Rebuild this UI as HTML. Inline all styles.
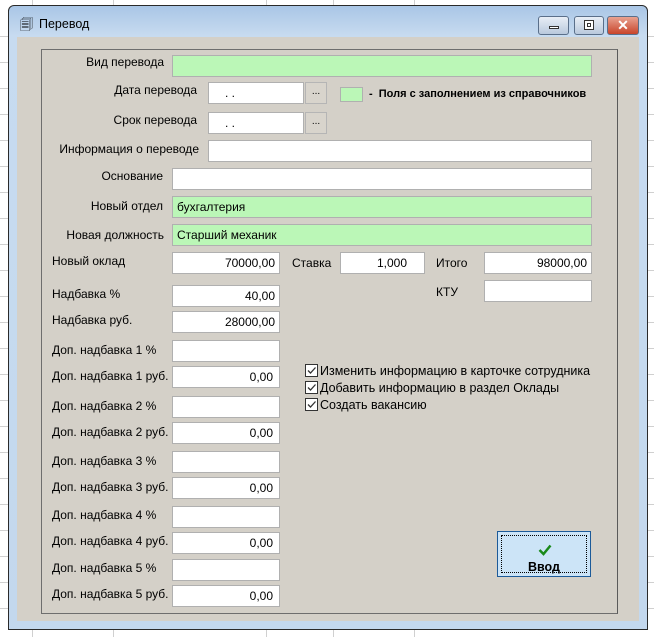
<!DOCTYPE html>
<html><head><meta charset="utf-8"><style>
*{margin:0;padding:0;box-sizing:border-box}
body{width:654px;height:637px;position:relative;overflow:hidden;background:#fff;font-family:"Liberation Sans",Arial,sans-serif;font-size:12px;color:#000}
.a{position:absolute}
.vl{position:absolute;top:0;width:1px;height:637px;background:#d0d0d0}
.hl{position:absolute;left:0;height:1px;width:654px;background:#d0d0d0}
.win{position:absolute;left:8px;top:5px;width:640px;height:625px;border:1px solid #2a2a2a;border-radius:6px 6px 0 0;background:linear-gradient(#a9c6e6,#c7dbf0 30px,#c3d8ee);}
.client{position:absolute;left:8px;top:31px;width:622px;height:584px;background:#d4d0c8}
.frame{position:absolute;left:24px;top:12px;width:577px;height:565px;border:1px solid #6e6e6e;border-right-color:#5a5a5a}
.in{position:absolute;background:#fff;border:1px solid #b0b0b0;height:22px;text-align:right;padding-right:14px;line-height:20px;font-size:12px}
.g{background:#bbf7b7;text-align:left;padding-left:4px}
.l{position:absolute;line-height:20px;font-size:12px;white-space:nowrap}
.r{text-align:right}
.btn{position:absolute;width:22px;height:22px;border:1px solid #b5b5b5;background:#d8d4cc;text-align:center;font-size:10px;line-height:18px}
.cb{position:absolute;width:13px;height:13px;border:1px solid #333;background:#fff}
.tb{position:absolute;top:10px;height:19px;border:1px solid #5a6f8a;border-radius:3px}
</style></head><body>
<div class="vl" style="left:32px"></div><div class="vl" style="left:113px"></div><div class="vl" style="left:266px"></div><div class="vl" style="left:333px"></div><div class="vl" style="left:414px"></div>
<div class="hl" style="top:36px"></div><div class="hl" style="top:62px"></div><div class="hl" style="top:88px"></div><div class="hl" style="top:114px"></div><div class="hl" style="top:140px"></div><div class="hl" style="top:166px"></div><div class="hl" style="top:192px"></div><div class="hl" style="top:218px"></div><div class="hl" style="top:244px"></div><div class="hl" style="top:270px"></div><div class="hl" style="top:296px"></div><div class="hl" style="top:322px"></div><div class="hl" style="top:348px"></div><div class="hl" style="top:374px"></div><div class="hl" style="top:400px"></div><div class="hl" style="top:426px"></div><div class="hl" style="top:452px"></div><div class="hl" style="top:478px"></div><div class="hl" style="top:504px"></div><div class="hl" style="top:530px"></div><div class="hl" style="top:556px"></div><div class="hl" style="top:582px"></div><div class="hl" style="top:608px"></div>
<div class="win">
 <div class="a" style="left:11px;top:10px;font-size:13px">&#x1F5D0;</div>
 <div class="a" style="left:30px;top:11px;font-size:12.5px">Перевод</div>
 <div class="tb" style="left:529px;width:31px;background:linear-gradient(#e8eef6,#b9c9dd)"><div class="a" style="left:10px;top:9px;width:10px;height:3px;background:#fff;border:1px solid #333"></div></div>
 <div class="tb" style="left:565px;width:30px;background:linear-gradient(#e8eef6,#b9c9dd)"><div class="a" style="left:9px;top:3px;width:10px;height:10px;border:1px solid #333;background:#fff"><div style="margin:2px;width:4px;height:4px;border:1px solid #333"></div></div></div>
 <div class="tb" style="left:598px;width:32px;background:linear-gradient(#e9a290,#c8442a);color:#fff;font-weight:bold;text-align:center;line-height:16px;font-size:14px">✕</div>
 <div class="client"><div class="frame"></div></div>
</div>
<div class="l r" style="left:40px;width:124px;top:52px">Вид перевода</div>
<div class="in g" style="left:172px;top:55px;width:420px"></div>
<div class="l r" style="left:40px;width:157px;top:80px">Дата перевода</div>
<div class="in" style="left:208px;top:82px;width:96px;text-align:left;padding-left:16px">. .</div>
<div class="btn" style="left:305px;top:82px">...</div>
<div class="a" style="left:340px;top:87px;width:23px;height:15px;background:#bbf7b7;border:1px solid #b0b0b0"></div>
<div class="l" style="left:369px;top:84px;font-weight:bold;font-size:11px">-&nbsp; Поля с заполнением из справочников</div>
<div class="l r" style="left:40px;width:157px;top:110px">Срок перевода</div>
<div class="in" style="left:208px;top:112px;width:96px;text-align:left;padding-left:16px">. .</div>
<div class="btn" style="left:305px;top:112px">...</div>
<div class="l r" style="left:40px;width:159px;top:139px">Информация о переводе</div>
<div class="in" style="left:208px;top:140px;width:384px"></div>
<div class="l r" style="left:40px;width:123px;top:166px">Основание</div>
<div class="in" style="left:172px;top:168px;width:420px"></div>
<div class="l r" style="left:40px;width:123px;top:196px">Новый отдел</div>
<div class="in g" style="left:172px;top:196px;width:420px">бухгалтерия</div>
<div class="l r" style="left:40px;width:124px;top:225px">Новая должность</div>
<div class="in g" style="left:172px;top:224px;width:420px">Старший механик</div>
<div class="l" style="left:52px;top:251px">Новый оклад</div>
<div class="in" style="left:172px;top:252px;width:108px;padding-right:4px">70000,00</div>
<div class="l" style="left:292px;top:253px">Ставка</div>
<div class="in" style="left:340px;top:252px;width:85px;padding-right:17px">1,000</div>
<div class="l" style="left:436px;top:253px">Итого</div>
<div class="in" style="left:484px;top:252px;width:108px;padding-right:4px">98000,00</div>
<div class="l" style="left:436px;top:282px">КТУ</div>
<div class="in" style="left:484px;top:280px;width:108px"></div>
<div class="l" style="left:52px;top:284px">Надбавка %</div>
<div class="in" style="left:172px;top:285px;width:108px;padding-right:4px">40,00</div>
<div class="l" style="left:52px;top:310px">Надбавка руб.</div>
<div class="in" style="left:172px;top:311px;width:108px;padding-right:4px">28000,00</div>
<div class="l" style="left:52px;top:340px">Доп. надбавка 1 %</div><div class="in" style="left:172px;top:340px;width:108px"></div>
<div class="l" style="left:52px;top:366px">Доп. надбавка 1 руб.</div><div class="in" style="left:172px;top:366px;width:108px;padding-right:6px">0,00</div>
<div class="l" style="left:52px;top:396px">Доп. надбавка 2 %</div><div class="in" style="left:172px;top:396px;width:108px"></div>
<div class="l" style="left:52px;top:422px">Доп. надбавка 2 руб.</div><div class="in" style="left:172px;top:422px;width:108px;padding-right:6px">0,00</div>
<div class="l" style="left:52px;top:451px">Доп. надбавка 3 %</div><div class="in" style="left:172px;top:451px;width:108px"></div>
<div class="l" style="left:52px;top:477px">Доп. надбавка 3 руб.</div><div class="in" style="left:172px;top:477px;width:108px;padding-right:6px">0,00</div>
<div class="l" style="left:52px;top:505px">Доп. надбавка 4 %</div><div class="in" style="left:172px;top:506px;width:108px"></div>
<div class="l" style="left:52px;top:531px">Доп. надбавка 4 руб.</div><div class="in" style="left:172px;top:532px;width:108px;padding-right:6px">0,00</div>
<div class="l" style="left:52px;top:558px">Доп. надбавка 5 %</div><div class="in" style="left:172px;top:559px;width:108px"></div>
<div class="l" style="left:52px;top:584px">Доп. надбавка 5 руб.</div><div class="in" style="left:172px;top:585px;width:108px;padding-right:6px">0,00</div>
<div class="cb" style="left:305px;top:364px"><svg width="11" height="11"><path d="M2 5.5L4.5 8L9.5 2.5" stroke="#333" stroke-width="1.3" fill="none"/></svg></div>
<div class="l" style="left:320px;top:361px;font-size:12.5px">Изменить информацию в карточке сотрудника</div>
<div class="cb" style="left:305px;top:381px"><svg width="11" height="11"><path d="M2 5.5L4.5 8L9.5 2.5" stroke="#333" stroke-width="1.3" fill="none"/></svg></div>
<div class="l" style="left:320px;top:378px;font-size:12.5px">Добавить информацию в раздел Оклады</div>
<div class="cb" style="left:305px;top:398px"><svg width="11" height="11"><path d="M2 5.5L4.5 8L9.5 2.5" stroke="#333" stroke-width="1.3" fill="none"/></svg></div>
<div class="l" style="left:320px;top:395px;font-size:12.5px">Создать вакансию</div>
<div class="a" style="left:497px;top:531px;width:94px;height:46px;border:1px solid #1c5a99;background:#cce4f7">
 <div class="a" style="left:3px;top:3px;width:86px;height:38px;border:1px dotted #000"></div>
 <svg class="a" style="left:40px;top:12px" width="14" height="12"><path d="M1.5 6L5.5 10L12.5 1.5" stroke="#1a8a1a" stroke-width="2.5" fill="none"/></svg>
 <div class="a" style="left:0;width:92px;top:28px;text-align:center;font-weight:bold;font-size:12.5px">Ввод</div>
</div>
</body></html>
